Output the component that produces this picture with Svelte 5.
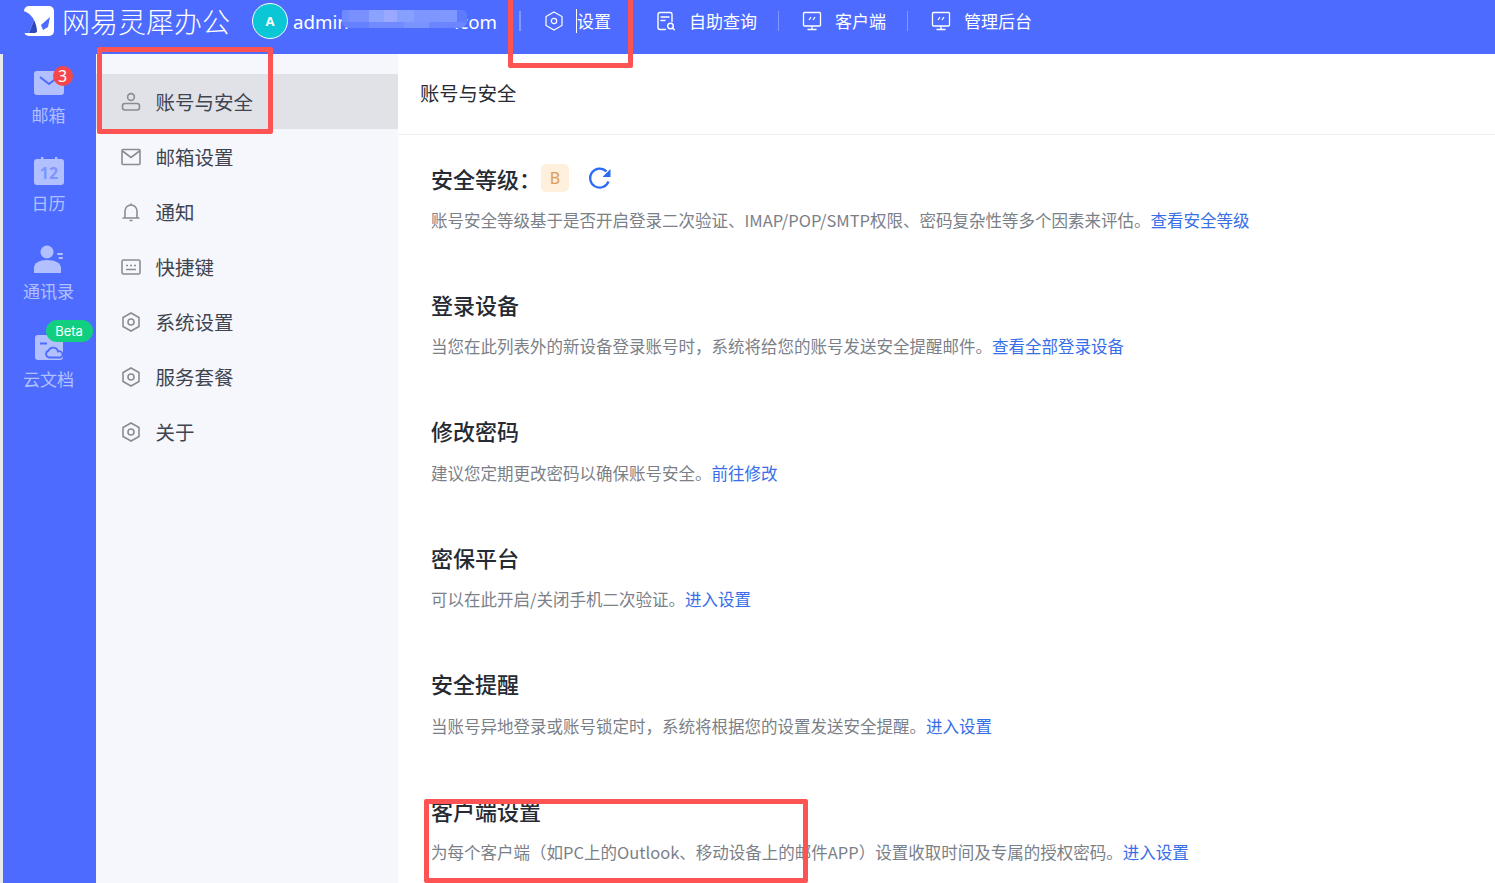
<script>
  const menu = [
    { label: '账号与安全', icon: 'user', active: true },
    { label: '邮箱设置', icon: 'mail' },
    { label: '通知', icon: 'bell' },
    { label: '快捷键', icon: 'keys' },
    { label: '系统设置', icon: 'hex' },
    { label: '服务套餐', icon: 'hex' },
    { label: '关于', icon: 'hex' }
  ];
  const sections = [
    { title: '登录设备', desc: '当您在此列表外的新设备登录账号时，系统将给您的账号发送安全提醒邮件。', link: '查看全部登录设备' },
    { title: '修改密码', desc: '建议您定期更改密码以确保账号安全。', link: '前往修改' },
    { title: '密保平台', desc: '可以在此开启/关闭手机二次验证。', link: '进入设置' },
    { title: '安全提醒', desc: '当账号异地登录或账号锁定时，系统将根据您的设置发送安全提醒。', link: '进入设置' },
    { title: '客户端设置', desc: '为每个客户端（如PC上的Outlook、移动设备上的邮件APP）设置收取时间及专属的授权密码。', link: '进入设置' }
  ];
</script>

<div class="page">
  <header class="top">
    <svg class="logo" viewBox="0 0 30 30" width="30" height="30">
      <rect width="30" height="30" rx="5" fill="#fff"/>
      <path d="M-1 5C4 6 8 10 10 14L5 27 0 27z" fill="#4d6cff"/>
      <path d="M10 14L5 27h6l2-1c0-4-1-8-3-12z" fill="#2f48bd"/>
      <path d="M17 19L26 11l-2 10-5 3z" fill="#4d6cff"/>
    </svg>
    <span class="brand">网易灵犀办公</span>
    <span class="avatar">A</span>
    <span class="email">admin<span>.com</span><span class="blur"></span></span>
    <nav class="nav">
      <span class="sep first"></span>
      <a class="nav-item n-set">
        <svg viewBox="0 0 20 20" width="20" height="20" fill="none" stroke="#fff" stroke-width="1.200"><path d="M10 1l8 4.500v9L10 19l-8-4.500v-9z"/><circle cx="10" cy="10" r="2.700"/></svg>
        <span class="nav-text cursor">设置</span>
      </a>
      <a class="nav-item n-help">
        <svg viewBox="0 0 20 20" width="20" height="20" fill="none" stroke="#fff" stroke-width="1.400" stroke-linecap="round"><path d="M9.500 18.500H4a2 2 0 0 1-2-2v-13a2 2 0 0 1 2-2h10a2 2 0 0 1 2 2v7"/><path d="M5 6h8M5 9.500h4"/><circle cx="14.500" cy="15" r="2.800"/><path d="M16.500 17l1.800 1.800"/></svg>
        <span class="nav-text">自助查询</span>
      </a>
      <span class="sep"></span>
      <a class="nav-item n-client">
        <svg viewBox="0 0 20 20" width="20" height="20" fill="none" stroke="#fff" stroke-width="1.300"><rect x="1.500" y="1.500" width="17" height="13.500" rx="1"/><path d="M10 15v3.500M5.500 18.500h9M7 9l2-3M11 9l2-3"/></svg>
        <span class="nav-text">客户端</span>
      </a>
      <span class="sep"></span>
      <a class="nav-item n-admin">
        <svg viewBox="0 0 20 20" width="20" height="20" fill="none" stroke="#fff" stroke-width="1.300"><rect x="1.500" y="1.500" width="17" height="13.500" rx="1"/><path d="M10 15v3.500M5.500 18.500h9M7 9l2-3M11 9l2-3"/></svg>
        <span class="nav-text">管理后台</span>
      </a>
    </nav>
  </header>

  <div class="body">
    <aside class="rail">
      <div class="rail-item">
        <div class="rail-icon">
          <svg viewBox="0 0 30 26" width="30" height="26"><rect y="1" width="30" height="24" rx="3" fill="#b3c0ff"/><path d="M6 7l9 7 9-7" fill="none" stroke="#4d6cff" stroke-width="2"/></svg>
          <span class="badge">3</span>
        </div>
        <span>邮箱</span>
      </div>
      <div class="rail-item">
        <div class="rail-icon">
          <svg viewBox="0 0 30 28" width="30" height="28"><rect y="2" width="30" height="26" rx="3" fill="#b3c0ff"/><rect x="7" width="2.400" height="5" fill="#b3c0ff"/><rect x="21" width="2.400" height="5" fill="#b3c0ff"/><text x="15" y="22" text-anchor="middle" class="cal">12</text></svg>
        </div>
        <span>日历</span>
      </div>
      <div class="rail-item">
        <div class="rail-icon">
          <svg viewBox="0 0 30 28" width="30" height="28" fill="#b3c0ff"><circle cx="13" cy="7" r="6.500"/><path d="M0 28v-5c0-5 5-8 13-8s14 3 14 8v5z"/><rect x="23" y="8" width="6" height="2" rx="1"/><rect x="24.500" y="12" width="4.500" height="2" rx="1"/></svg>
        </div>
        <span>通讯录</span>
      </div>
      <div class="rail-item">
        <div class="rail-icon">
          <svg viewBox="0 0 28 25" width="28" height="25" fill="#b3c0ff"><path d="M3 0h9l3 4h10a3 3 0 0 1 3 3v15a3 3 0 0 1-3 3H3a3 3 0 0 1-3-3V3a3 3 0 0 1 3-3z"/><rect x="5" y="7.500" width="7" height="2" fill="#4d6cff"/><path d="M14 22.500a3.500 3.500 0 0 1-.5-6.800 5 5 0 0 1 9.500.8A3 3 0 0 1 25.500 22.500z" fill="#b3c0ff" stroke="#4d6cff" stroke-width="1.800"/></svg>
          <span class="beta">Beta</span>
        </div>
        <span>云文档</span>
      </div>
    </aside>

    <aside class="side">
      {#each menu as m}
        <div class="menu-item" class:active={m.active}>
          <svg viewBox="0 0 20 20" width="20" height="20" fill="none" stroke="#8a8c91" stroke-width="1.600">
            {#if m.icon === 'user'}
              <circle cx="10" cy="5" r="3.400"/><rect x="1.500" y="11.500" width="17" height="6.500" rx="2.500"/>
            {:else if m.icon === 'mail'}
              <rect x="1" y="2.500" width="18" height="15" rx="1"/><path d="M1.500 4l8.500 6.500L18.500 4"/>
            {:else if m.icon === 'bell'}
              <path d="M4 16V9a6 6 0 0 1 12 0v7"/><path d="M1.500 16h17M10 1.500V3M8.500 18.500h3"/>
            {:else if m.icon === 'keys'}
              <rect x="1" y="3" width="18" height="14" rx="1.500"/><path d="M5 8.500h2M9 8.500h2M13 8.500h2M5 12.500h10"/>
            {:else}
              <path d="M10 1l8 4.500v9L10 19l-8-4.500v-9z"/><circle cx="10" cy="10" r="3"/>
            {/if}
          </svg>
          <span>{m.label}</span>
        </div>
      {/each}
    </aside>

    <main class="main">
      <div class="head">账号与安全</div>
      <div class="content">
        <section class="sec">
          <h2 class="title">安全等级：<span class="grade">B</span>
            <svg class="refresh" viewBox="0 0 24 24" width="24" height="24" fill="none"><path d="M20.500 15.500a9.500 9.500 0 1 1-2-10" stroke="#2b6bf3" stroke-width="2.200"/><path d="M22.500 3v8h-8z" fill="#2b6bf3"/></svg>
          </h2>
          <p class="desc">账号安全等级基于是否开启登录二次验证、IMAP/POP/SMTP权限、密码复杂性等多个因素来评估。<a>查看安全等级</a></p>
        </section>
        {#each sections as s}
          <section class="sec">
            <h2 class="title">{s.title}</h2>
            <p class="desc">{s.desc}<a>{s.link}</a></p>
          </section>
        {/each}
      </div>
    </main>
  </div>

  <div class="mark m1"></div>
  <div class="mark m2"></div>
  <div class="mark m3"></div>
</div>

<style>
  :global(body) { margin: 0; background: #fff; }
  .page {
    position: relative;
    width: 1495px;
    height: 883px;
    overflow: hidden;
    display: flex;
    flex-direction: column;
    font-family: "Noto Sans CJK SC", "Noto Sans", sans-serif;
    color: #262a33;
  }
  .top {
    height: 54px;
    flex: none;
    box-sizing: border-box;
    padding: 0 0 12px 24px;
    background: #4d6cff;
    display: flex;
    align-items: center;
    color: #fff;
  }
  .logo { flex: none; }
  .brand { margin-left: 8px; font-size: 28px; font-weight: 300; line-height: 42px; white-space: nowrap; width: 170px; }
  .avatar {
    margin-left: 20px;
    width: 36px; height: 36px;
    box-sizing: border-box;
    border: 1px solid #fff;
    border-radius: 50%;
    background: #0bc6d4;
    display: flex; align-items: center; justify-content: center;
    font-size: 13px; font-weight: 700;
    font-family: "Noto Sans", sans-serif;
  }
  .email {
    position: relative;
    margin-left: 5px;
    width: 204px;
    font-size: 18.700px;
    font-family: "Noto Sans", sans-serif;
    white-space: nowrap;
    display: flex;
    justify-content: space-between;
  }
  .blur {
    position: absolute;
    left: 49px; top: 1px;
    width: 125px; height: 18px;
    border-radius: 2px 5px 7px 7px;
    background:
      linear-gradient(90deg, #6f8aff 0 6%, #7a90ff 6% 22%, #8ba3ff 22% 34%, #9aa8ff 34% 44%, #85a0ff 44% 58%, #7e96ff 58% 78%, #7f98ff 78% 92%, #5d7bff 92%) top / 100% 12px no-repeat,
      linear-gradient(90deg, #6681ff 0 22%, #708bff 22% 50%, #7a94ff 50% 70%, #6a85ff 70% 100%) bottom / 100% 6px no-repeat;
  }
  .nav { margin-left: 22px; display: flex; align-items: center; }
  .sep { width: 1px; height: 20px; background: rgba(255, 255, 255, .3); flex: none; }
  .sep.first { width: 2px; }
  .nav-item { display: flex; align-items: center; font-size: 17px; white-space: nowrap; color: #fff; }
  .nav-text { margin-left: 13px; line-height: 24px; }
  .n-set { margin-left: 23px; }
  .n-help { margin-left: 45px; margin-right: 21px; }
  .n-client { margin-left: 23px; margin-right: 21px; }
  .n-admin { margin-left: 23px; }
  .cursor { box-shadow: -1px 0 0 #fff; }

  .body { flex: 1; display: flex; min-height: 0; padding-left: 3px; background: #e8e9ec; }
  .rail { width: 93px; flex: none; background: #4d6cff; padding: 15px 2px 0 0; box-sizing: border-box; }
  .rail-item {
    height: 88px;
    display: flex; flex-direction: column; align-items: center;
    font-size: 17px; line-height: 24px; color: #b3c0ff;
  }
  .rail-icon {
    position: relative;
    height: 28px;
    margin-bottom: 6px;
    display: flex; align-items: center; justify-content: center;
    width: 30px;
  }
  .rail-item > span { white-space: nowrap; }
  .cal { font-size: 16px; font-weight: 700; fill: #7d95ff; font-family: "Noto Sans", sans-serif; }
  .badge {
    position: absolute; left: 19px; top: -3px;
    width: 20px; height: 20px; border-radius: 50%;
    background: #f5474b; color: #fff;
    font-size: 16px; line-height: 20px; text-align: center;
    font-family: "Noto Sans", sans-serif;
  }
  .beta {
    position: absolute; left: 12px; top: -13px;
    width: 47px; height: 22px; border-radius: 11px;
    background: #12cf80; color: #fff;
    font-size: 13px; line-height: 22px; text-align: center;
    font-family: "Inter", sans-serif;
  }

  .side {
    width: 302px; flex: none; box-sizing: border-box;
    background: #f5f7fc;
    padding-top: 20px;
  }
  .menu-item {
    height: 55px;
    display: flex; align-items: center;
    padding-left: 25px;
    font-size: 19.500px;
    color: #3f4450;
  }
  .menu-item span { margin: -1px 0 0 14.400px; }
  .menu-item.active { background: #e0e2e7; }

  .main { flex: 1; min-width: 0; background: #fff; }
  .head {
    height: 81px; box-sizing: border-box;
    border-bottom: 1px solid #eeeff2;
    padding: 23px 0 0 22px;
    font-size: 19.250px; line-height: 32px;
    color: #262a33;
  }
  .content { padding: 24.600px 0 0 33px; }
  .sec { height: 126.400px; }
  .title {
    margin: 0; height: 36px;
    display: flex; align-items: center;
    font-size: 22px; font-weight: 500; line-height: 36px;
    color: #262a33;
    white-space: nowrap;
  }
  .grade {
    width: 28px; height: 28px; border-radius: 5px; margin-left: 0;
    background: #fef0dc; color: #dd9d51;
    font-size: 16px; font-weight: 400; line-height: 28px; text-align: center;
    font-family: "Noto Sans", sans-serif;
  }
  .refresh { margin-left: 19px; }
  .desc {
    margin: 12.400px 0 0;
    font-size: 16.500px; line-height: 24px;
    color: #7b7f88;
    white-space: nowrap;
  }
  .desc a { color: #386ee7; }

  .mark {
    position: absolute;
    box-sizing: border-box;
    border: 5px solid #fd5353;
    border-radius: 2px;
    pointer-events: none;
  }
  .m1 { left: 97px; top: 47px; width: 176px; height: 87px; }
  .m2 { left: 508px; top: -10px; width: 125px; height: 78px; }
  .m3 { left: 424px; top: 799px; width: 384px; height: 84px; }
</style>
